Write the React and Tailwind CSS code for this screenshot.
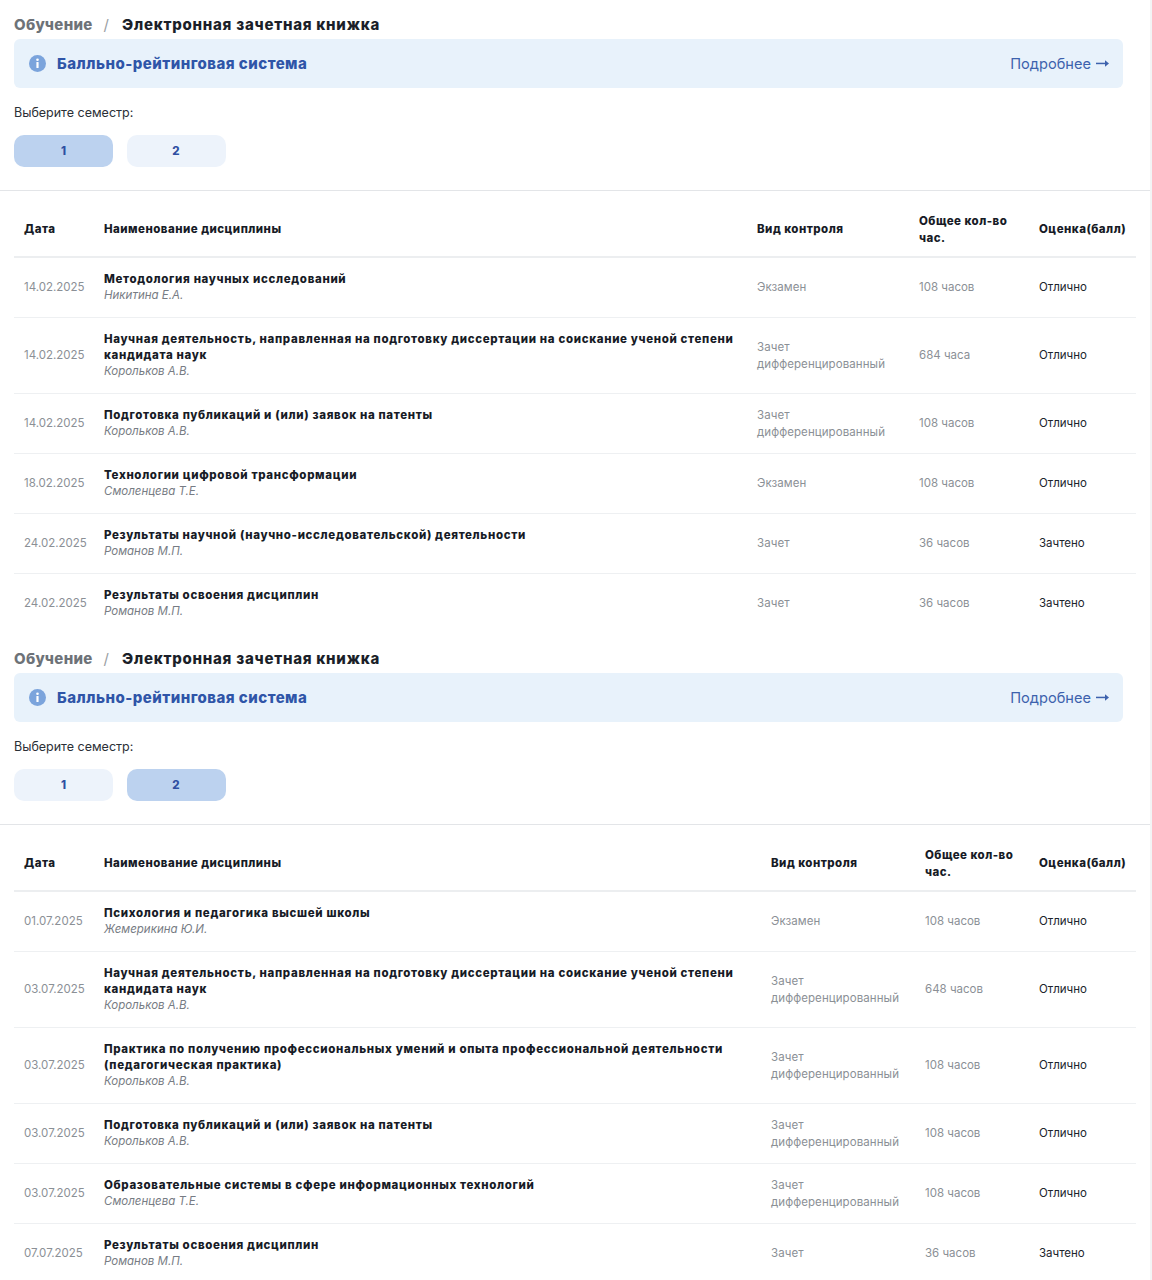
const A = "Отлично", Z = "Зачтено", E = "Экзамен", D = "Зачет дифференцированный", C = "Зачет";
const NID = "Научная деятельность, направленная на подготовку диссертации на соискание ученой степени кандидата наук";

const first = [
  ["14.02.2025", "Методология научных исследований", "Никитина Е.А.", E, "108 часов", A],
  ["14.02.2025", NID, "Корольков А.В.", D, "684 часа", A],
  ["14.02.2025", "Подготовка публикаций и (или) заявок на патенты", "Корольков А.В.", D, "108 часов", A],
  ["18.02.2025", "Технологии цифровой трансформации", "Смоленцева Т.Е.", E, "108 часов", A],
  ["24.02.2025", "Результаты научной (научно-исследовательской) деятельности", "Романов М.П.", C, "36 часов", Z],
  ["24.02.2025", "Результаты освоения дисциплин", "Романов М.П.", C, "36 часов", Z],
];
const second = [
  ["01.07.2025", "Психология и педагогика высшей школы", "Жемерикина Ю.И.", E, "108 часов", A],
  ["03.07.2025", NID, "Корольков А.В.", D, "648 часов", A],
  ["03.07.2025", "Практика по получению профессиональных умений и опыта профессиональной деятельности (педагогическая практика)", "Корольков А.В.", D, "108 часов", A],
  ["03.07.2025", "Подготовка публикаций и (или) заявок на патенты", "Корольков А.В.", D, "108 часов", A],
  ["03.07.2025", "Образовательные системы в сфере информационных технологий", "Смоленцева Т.Е.", D, "108 часов", A],
  ["07.07.2025", "Результаты освоения дисциплин", "Романов М.П.", C, "36 часов", Z],
];

function InfoIcon() {
  return (
    <svg width="17" height="17" viewBox="0 0 17 17" className="shrink-0">
      <circle cx="8.5" cy="8.5" r="8.5" fill="#7ba4dc" />
      <circle cx="8.5" cy="4.8" r="1.3" fill="#fff" />
      <rect x="7.4" y="7" width="2.2" height="6" rx="0.6" fill="#fff" />
    </svg>
  );
}

function ArrowIcon() {
  return (
    <svg width="13" height="9" viewBox="0 0 13 9" className="shrink-0">
      <rect x="0" y="3.7" width="10" height="1.5" fill="#3d62ad" />
      <path d="M9 1.2 L13 4.45 L9 7.7 Z" fill="#3d62ad" />
    </svg>
  );
}

function Row({ row, cols }) {
  const [date, name, teacher, control, hours, grade] = row;
  return (
    <div className={`grid ${cols} items-center pt-[13px] pb-[13px] border-b border-[#eef0f2] last:border-b-0`}>
      <div className="pl-[10px] text-[11.5px] text-[#8b9096]">{date}</div>
      <div className="pl-[10px] pr-[10px] pb-[1px]">
        <div className="text-[11.5px] leading-[16px] font-extrabold tracking-[0.66px] text-[#171b26]">{name}</div>
        <div className="text-[11.5px] leading-[16px] italic text-[#777c84]">{teacher}</div>
      </div>
      <div className="-my-px pl-[10px] pr-[20px] text-[11.5px] leading-[17px] tracking-[0.08px] text-[#8b9096]">{control}</div>
      <div className="pl-[10px] text-[11.5px] text-[#8b9096]">{hours}</div>
      <div className="pl-[10px] text-[11.5px] text-[#20242c]">{grade}</div>
    </div>
  );
}

function Section({ active, rows, cols, className }) {
  const btn = (n) => (
    <button className={`w-[99px] h-[32px] pt-px rounded-[10px] text-[11.5px] font-extrabold text-[#2f4fa2] ${active === n ? "bg-[#bcd2ef]" : "bg-[#edf3fb]"}`}>{n}</button>
  );
  return (
    <section className={className}>
      <div className="px-[14px]">
        <div className="flex items-center h-[39px] pt-[12px] text-[15px] font-extrabold">
          <span className="tracking-[0.3px] text-[#6d7278]">Обучение</span>
          <span className="ml-[11px] mr-[13px] font-normal text-[#9a9ea3]">/</span>
          <span className="tracking-[0.75px] text-[#1b1f29]">Электронная зачетная книжка</span>
        </div>
        <div className="flex items-center justify-between h-[49px] pl-[15px] pr-[14px] bg-[#e8f2fb] rounded-[6px] w-[1109px]">
          <div className="flex items-center gap-[11px]">
            <InfoIcon />
            <span className="pt-[2px] text-[15px] font-extrabold tracking-[0.47px] text-[#2f55a8]">Балльно-рейтинговая система</span>
          </div>
          <div className="flex items-center gap-[5px]">
            <span className="pt-[2px] text-[14.6px] text-[#3d62ad]">Подробнее</span>
            <ArrowIcon />
          </div>
        </div>
        <div className="mt-[16px] text-[12.5px] leading-[18px] text-[#2b2f36]">Выберите семестр:</div>
        <div className="mt-[13px] flex gap-[13.5px]">{btn(1)}{btn(2)}</div>
      </div>
      <div className="mt-[23px] border-t border-[#e3e5e8]"></div>
      <div className="ml-[14px] w-[1122px]">
        <div className={`grid ${cols} items-center h-[67px] pt-[12px] border-b-2 border-[#eceef0] text-[11.5px] leading-[17px] font-extrabold tracking-[0.47px] text-[#171b26]`}>
          <div className="pl-[10px]">Дата</div>
          <div className="pl-[10px]">Наименование дисциплины</div>
          <div className="pl-[10px]">Вид контроля</div>
          <div className="pl-[10px]">Общее кол-во час.</div>
          <div className="pl-[10px]">Оценка(балл)</div>
        </div>
        {rows.map((r, i) => <Row key={i} row={r} cols={cols} />)}
      </div>
    </section>
  );
}

export default function App() {
  return (
    <div className="h-[1280px] overflow-hidden bg-white font-['Inter','Noto_Sans',sans-serif]">
      <div className="border-r-2 border-[#f3f4f5]">
        <Section active={1} rows={first} cols="grid-cols-[80px_653px_162px_120px_107px]" className="h-[634px]" />
        <Section active={2} rows={second} cols="grid-cols-[80px_667px_154px_114px_107px]" />
      </div>
    </div>
  );
}
